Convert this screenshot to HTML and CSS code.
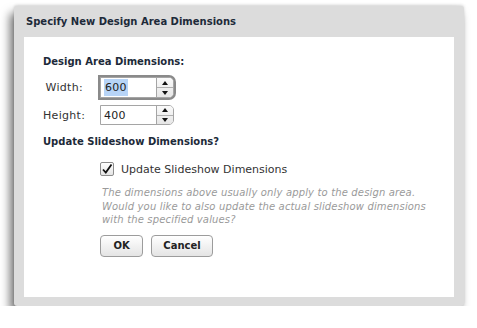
FILE: index.html
```html
<!DOCTYPE html>
<html>
<head>
  <title>Specify New Design Area Dimensions</title>
  <link rel="stylesheet" href="styles.css">
</head>
<body>
<div class="dialog">
  <div class="title">Specify New Design Area Dimensions</div>
  <div class="panel">
    <h3 class="section">Design Area Dimensions:</h3>

    <div class="field-row first">
      <label class="field-label" for="width">Width:</label>
      <div class="spin focused">
        <span class="spin-value"><span class="selected" id="width">600</span></span>
        <span class="spin-buttons">
          <span class="arrow up"></span>
          <span class="arrow down"></span>
        </span>
      </div>
    </div>

    <div class="field-row">
      <label class="field-label" for="height">Height:</label>
      <div class="spin">
        <span class="spin-value" id="height">400</span>
        <span class="spin-buttons">
          <span class="arrow up"></span>
          <span class="arrow down"></span>
        </span>
      </div>
    </div>

    <h3 class="section second">Update Slideshow Dimensions?</h3>

    <div class="check-row">
      <span class="checkbox">
        <svg width="12" height="12" viewBox="0 0 12 12">
          <path d="M2 6.5 L4.8 9.5 L10.5 1.5" fill="none" stroke="#111" stroke-width="1.8"/>
        </svg>
      </span>
      <span class="check-text">Update Slideshow Dimensions</span>
    </div>

    <p class="note">The dimensions above usually only apply to the design area.<br>
      Would you like to also update the actual slideshow dimensions<br>
      with the specified values?</p>

    <div class="buttons">
      <button class="btn ok">OK</button>
      <button class="btn">Cancel</button>
    </div>
  </div>
</div>
</body>
</html>
```

FILE: styles.css
```css
html, body {
  margin: 0;
  background: #fff;
}

body {
  font-family: 'DejaVu Sans', Verdana, sans-serif;
  font-size: 11px;
  color: #333;
}

.dialog {
  margin: 6px 0 0 14px;
  width: 450px;
  height: 300px;
  background: #dcdcdc;
  border-radius: 3px;
  box-shadow: -4px 7px 10px rgba(0, 0, 0, 0.55), 0 -1px 3px rgba(0, 0, 0, 0.15);
}

.title {
  height: 31px;
  line-height: 31px;
  padding-left: 12px;
  font-weight: bold;
  font-size: 10px;
  color: #1d2a39;
}

.panel {
  margin: 0 10px;
  height: 260px;
  background: #fff;
  padding: 18px 0 0 19px;
  box-sizing: border-box;
}

.section {
  margin: 0;
  font-size: 10px;
  line-height: 14px;
  font-weight: bold;
  color: #1d2a39;
}

.section.second {
  margin-top: 10px;
}

.field-row {
  display: flex;
  align-items: center;
  height: 20px;
  margin-top: 5px;
}

.field-row.first {
  height: 25px;
  margin-top: 6px;
}

.field-label {
  width: 40px;
  text-align: right;
  margin-right: 17px;
  color: #333;
  letter-spacing: 0.3px;
}

.spin {
  display: flex;
  width: 74px;
  height: 20px;
  box-sizing: border-box;
  border: 1px solid #a5a5a5;
  border-radius: 0 5px 5px 0;
  background: #fff;
}

.spin.focused {
  height: 21px;
  box-shadow: 0 0 0 2px #8a8a8a;
}

.spin-value {
  flex: 1;
  display: flex;
  align-items: center;
  padding-left: 3px;
  border-right: 1px solid #a5a5a5;
  color: #222;
  letter-spacing: 0.3px;
}

.selected {
  background: #b7d4f7;
  padding: 2px 1px;
}

.spin-buttons {
  width: 16px;
  display: flex;
  flex-direction: column;
  background: linear-gradient(#fafafa, #e6e6e6);
  border-radius: 0 4px 4px 0;
}

.arrow {
  flex: 1;
  display: flex;
  align-items: center;
  justify-content: center;
}

.arrow.up {
  border-bottom: 1px solid #b0b0b0;
}

.arrow.up::after {
  content: "";
  border-left: 3px solid transparent;
  border-right: 3px solid transparent;
  border-bottom: 4px solid #111;
}

.arrow.down::after {
  content: "";
  border-left: 3px solid transparent;
  border-right: 3px solid transparent;
  border-top: 4px solid #111;
}

.check-row {
  display: flex;
  align-items: center;
  height: 14px;
  margin-top: 13px;
  padding-left: 57px;
}

.checkbox {
  width: 14px;
  height: 14px;
  box-sizing: border-box;
  border: 1px solid #8c8c8c;
  border-radius: 2px;
  background: linear-gradient(#fff, #e4e4e4);
  display: flex;
  align-items: center;
  justify-content: center;
  margin-right: 7px;
}

.check-text {
  color: #333;
}

.note {
  margin: 10px 0 0 59px;
  font-size: 10px;
  line-height: 13.5px;
  font-style: italic;
  color: #9a9a9a;
  letter-spacing: 0.15px;
}

.buttons {
  display: flex;
  gap: 8px;
  margin-top: 8px;
  padding-left: 57px;
}

.btn {
  height: 22px;
  padding: 0;
  border: 1px solid #9c9c9c;
  border-radius: 4px;
  background: linear-gradient(#ffffff, #e4e4e4);
  font-family: 'DejaVu Sans', Verdana, sans-serif;
  font-size: 10px;
  font-weight: bold;
  color: #222;
  width: 62px;
}

.btn.ok {
  width: 43px;
}
```
